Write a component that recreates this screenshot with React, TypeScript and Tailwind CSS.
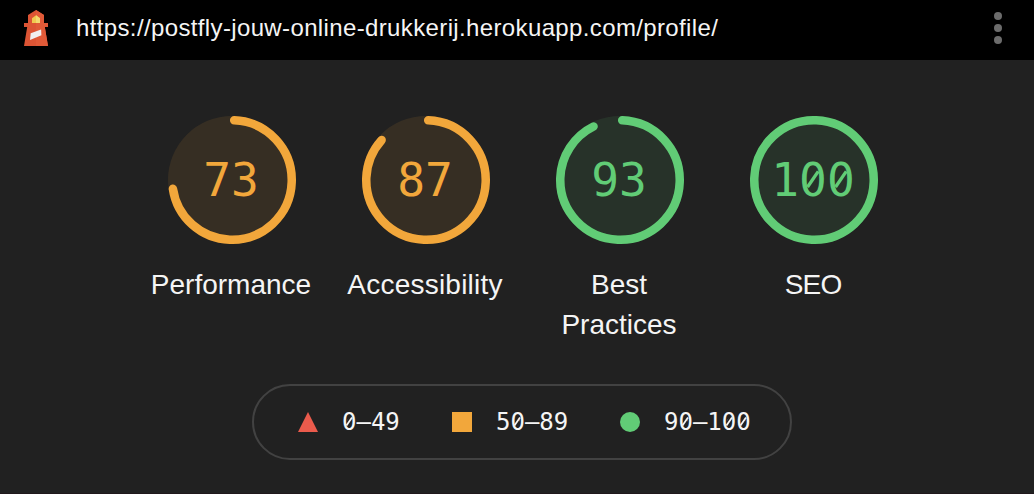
import React from "react";

const RADIUS = 59.73;
const CIRCUMFERENCE = 2 * Math.PI * RADIUS;

/** Monospaced digits whose zeros carry a slash instead of a dot. */
function Digits({ value, innerFill }: { value: string; innerFill: string }) {
  return (
    <>
      {value.split("").map((char, index) =>
        char === "0" ? (
          <span key={index} className="relative inline-block leading-none">
            0
            <svg viewBox="0 0 602 1000" className="absolute left-0 top-0 h-[1em] w-[0.602em]">
              <ellipse cx="301" cy="481" rx="90" ry="135" className={innerFill} />
              <path d="M185 650 417 312" stroke="currentColor" strokeWidth="72" />
            </svg>
          </span>
        ) : (
          <React.Fragment key={index}>{char}</React.Fragment>
        ),
      )}
    </>
  );
}

type GaugeProps = { score: number; label: string; tone: "average" | "pass"; tracking?: string };

function Gauge({ score, label, tone, tracking = "" }: GaugeProps) {
  const arc = score === 100 ? CIRCUMFERENCE : CIRCUMFERENCE * (score / 100 - 3.8 / 360);
  return (
    <div className={`flex w-[194px] flex-col items-center ${tone === "pass" ? "text-[#61cc76]" : "text-[#f2a73b]"}`}>
      <div className="grid h-32 w-32 place-items-center">
        <svg viewBox="0 0 128 128" className="col-start-1 row-start-1 h-32 w-32" fill="none">
          <circle cx="64" cy="64" r="64" fill="currentColor" fillOpacity="0.1" />
          <circle
            cx="64"
            cy="64"
            r={RADIUS}
            stroke="currentColor"
            strokeWidth="8.53"
            strokeLinecap="round"
            strokeDasharray={`${arc} ${CIRCUMFERENCE}`}
            transform="rotate(-87.9 64 64)"
          />
        </svg>
        <span className="col-start-1 row-start-1 whitespace-nowrap pr-[2px] font-['DejaVu_Sans_Mono',monospace] text-[46.2px] leading-[54px]">
          <Digits value={String(score)} innerFill="fill-[#27322a]" />
        </span>
      </div>
      <div className={`mt-[21px] w-[170px] pr-[2px] text-center text-[28px] leading-10 text-[#f5f5f5] ${tracking}`}>
        {label.split(" ").map((word) => (
          <div key={word}>{word}</div>
        ))}
      </div>
    </div>
  );
}

function Lighthouse() {
  return (
    <svg width="24" height="36" viewBox="0 0 24 36">
      <path d="M12 0 20 5v8h4v4h-3.2L24 36H0l3.2-19H0v-4h4V5z" fill="#dc5434" />
      <path d="M12 0 20 5v8h4v4h-3.2L24 36H12z" fill="#e05a38" />
      <path d="M8 13V8.2l4-3 4 3V13z" fill="#efc94f" />
      <path d="M12 5.2l4 3V13h-4z" fill="#f3d970" />
      <path d="m6.7 23.2 10.4-3.6.3 5.6L6 30z" fill="#f0f0f0" />
    </svg>
  );
}

export default function App() {
  return (
    <div className="flex h-[494px] w-[1034px] flex-col overflow-hidden bg-[#212121] font-['Liberation_Sans',Arial,sans-serif]">
      <header className="flex h-[60px] shrink-0 items-center bg-black pb-1 pl-6 pr-8">
        <Lighthouse />
        <span className="ml-7 whitespace-nowrap pb-px text-[24px] leading-7 tracking-[0.366px] text-[#f5f5f5]">
          https://postfly-jouw-online-drukkerij.herokuapp.com/profile/
        </span>
        <svg className="ml-auto" width="8" height="32" viewBox="0 0 8 32" fill="#6c6c6c">
          <circle cx="4" cy="4" r="4" />
          <circle cx="4" cy="16" r="4" />
          <circle cx="4" cy="28" r="4" />
        </svg>
      </header>
      <main className="flex flex-1 flex-col pt-14">
        <section className="ml-[135px] flex h-[268px] items-start">
          <Gauge score={73} label="Performance" tone="average" />
          <Gauge score={87} label="Accessibility" tone="average" tracking="tracking-[0.22px]" />
          <Gauge score={93} label="Best Practices" tone="pass" />
          <Gauge score={100} label="SEO" tone="pass" tracking="tracking-[-0.8px]" />
        </section>
        <section className="ml-[252px] flex h-[76px] w-[540px] items-center rounded-full border-2 border-[#424242] pl-11 font-['DejaVu_Sans_Mono',monospace] text-[24px] leading-8 text-[#f5f5f5]">
          <div className="flex w-[154px] items-center gap-6">
            <svg width="20" height="20" viewBox="0 0 20 20" fill="#eb5b4c">
              <path d="M10 0 20 20H0z" />
            </svg>
            <span className="whitespace-nowrap">
              <Digits value="0–49" innerFill="fill-[#212121]" />
            </span>
          </div>
          <div className="flex w-[168px] items-center gap-6">
            <span className="h-5 w-5 bg-[#f2a73b]" />
            <span className="whitespace-nowrap">
              <Digits value="50–89" innerFill="fill-[#212121]" />
            </span>
          </div>
          <div className="flex items-center gap-6">
            <span className="h-5 w-5 rounded-full bg-[#61cc76]" />
            <span className="whitespace-nowrap">
              <Digits value="90–100" innerFill="fill-[#212121]" />
            </span>
          </div>
        </section>
      </main>
      <div className="h-px shrink-0 bg-[#20181c]" />
    </div>
  );
}
